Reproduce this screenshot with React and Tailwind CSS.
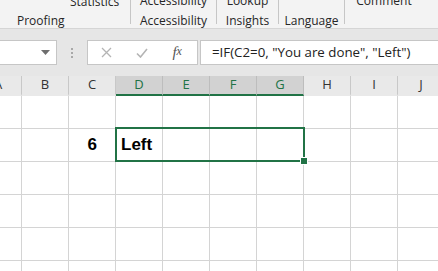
import { Fragment } from 'react';

const cols = ['A', 'B', 'C', 'D', 'E', 'F', 'G', 'H', 'I', 'J'];
const selected = ['D', 'E', 'F', 'G'];
const ui = { fontFamily: '"Open Sans", "Noto Sans", sans-serif' };
const cellFont = { fontFamily: '"Liberation Sans", Arial, sans-serif' };

function RibbonGroup({ width, top, label }) {
  return (
    <div className="relative h-full shrink-0" style={{ width }}>
      <div className="absolute inset-x-0 -top-[7px] leading-[16px] text-center whitespace-nowrap">{top}</div>
      <div className="absolute inset-x-0 top-[13px] leading-[16px] text-center whitespace-nowrap">{label}</div>
    </div>
  );
}

function Sep() {
  return <div className="w-px h-[24px] bg-[#c6c6c6] shrink-0" />;
}

export default function App() {
  return (
    <div className="w-[438px] h-[271px] overflow-hidden bg-white relative" style={ui}>
      {/* ribbon bottom */}
      <div className="h-[29px] bg-[#f3f3f3] border-b border-[#d5d5d5] flex text-[12px] text-[#262626] overflow-hidden">
        <div className="w-[130px] shrink-0 h-full relative">
          <div className="absolute left-[70px] -top-[6px] leading-[16px]">Statistics</div>
          <div className="absolute left-[17px] top-[13px] leading-[16px]">Proofing</div>
        </div>
        <Sep />
        <RibbonGroup width={85} top="Accessibility" label="Accessibility" />
        <Sep />
        <RibbonGroup width={61} top="Lookup" label="Insights" />
        <Sep />
        <RibbonGroup width={65} top="" label="Language" />
        <Sep />
        <RibbonGroup width={78} top="Comment" label="" />
      </div>

      {/* formula bar */}
      <div className="h-[47px] bg-[#e6e6e6] flex items-start pt-[11px]">
        <div className="w-[57px] h-[25px] bg-white border border-[#c6c6c6] border-l-0 flex items-center justify-end pr-[6px] shrink-0">
          <svg width="9" height="5" viewBox="0 0 9 5"><path d="M0 0h9L4.5 5z" fill="#6e6e6e" /></svg>
        </div>
        <div className="w-[30px] h-[25px] flex flex-col items-center justify-center gap-[2px] shrink-0">
          <div className="w-[2px] h-[2px] bg-[#a8a8a8]" />
          <div className="w-[2px] h-[2px] bg-[#a8a8a8]" />
          <div className="w-[2px] h-[2px] bg-[#a8a8a8]" />
        </div>
        <div className="w-[111px] h-[25px] bg-white border border-[#c6c6c6] flex items-center shrink-0">
          <div className="w-[38px] flex justify-center">
            <svg width="11" height="11" viewBox="0 0 11 11"><path d="M1 1l9 9M10 1l-9 9" stroke="#b4b4b4" strokeWidth="1.3" /></svg>
          </div>
          <div className="w-[32px] flex justify-center">
            <svg width="12" height="10" viewBox="0 0 12 10"><path d="M1 5.5l3.5 3.5L11 1" stroke="#b4b4b4" strokeWidth="1.6" fill="none" /></svg>
          </div>
          <div className="w-[40px] flex justify-center italic text-[15px] text-[#555] leading-none" style={{ fontFamily: '"Liberation Serif", "Times New Roman", serif' }}>
            f<span className="text-[12px]">x</span>
          </div>
        </div>
        <div className="flex-1 h-[25px] ml-[2px] bg-white border border-[#c6c6c6] border-r-0 flex items-center pl-[11px] text-[13.3px] text-[#222] whitespace-nowrap">
          =IF(C2=0, "You are done", "Left")
        </div>
      </div>

      {/* grid */}
      <div className="-ml-[25px] grid" style={{ gridTemplateColumns: 'repeat(10, 47px)', width: 470 }}>
        {cols.map((c) => {
          const sel = selected.includes(c);
          return (
            <div
              key={c}
              className={`h-[20px] flex items-center justify-center text-[13px] border-r ${
                sel
                  ? 'bg-[#d2d2d2] text-[#217346] border-[#bdbdbd] border-b-2 border-b-[#217346]'
                  : 'bg-[#e9e9e9] text-[#333] border-[#c8c8c8] border-b-2 border-b-[#e9e9e9]'
              }`}
            >
              {c}
            </div>
          );
        })}
        {[1, 2, 3, 4, 5, 6].map((r) => (
          <Fragment key={r}>
            {cols.map((c) => (
              <div
                key={c}
                className="h-[33px] border-r border-b border-[#d4d4d4] flex items-end text-[17px] font-bold text-black leading-none pb-[8px]"
                style={cellFont}
              >
                {r === 2 && c === 'C' && <span className="ml-auto pr-[18px]">6</span>}
                {r === 2 && c === 'D' && <span className="pl-[5px] whitespace-nowrap relative z-10">Left</span>}
              </div>
            ))}
          </Fragment>
        ))}
      </div>

      {/* selection outline */}
      <div className="absolute left-[115px] top-[127px] w-[190px] h-[35px] border-2 border-[#217346] pointer-events-none" />
      <div className="absolute left-[301px] top-[158px] w-[6px] h-[6px] bg-[#217346] outline outline-1 outline-white" />
    </div>
  );
}
